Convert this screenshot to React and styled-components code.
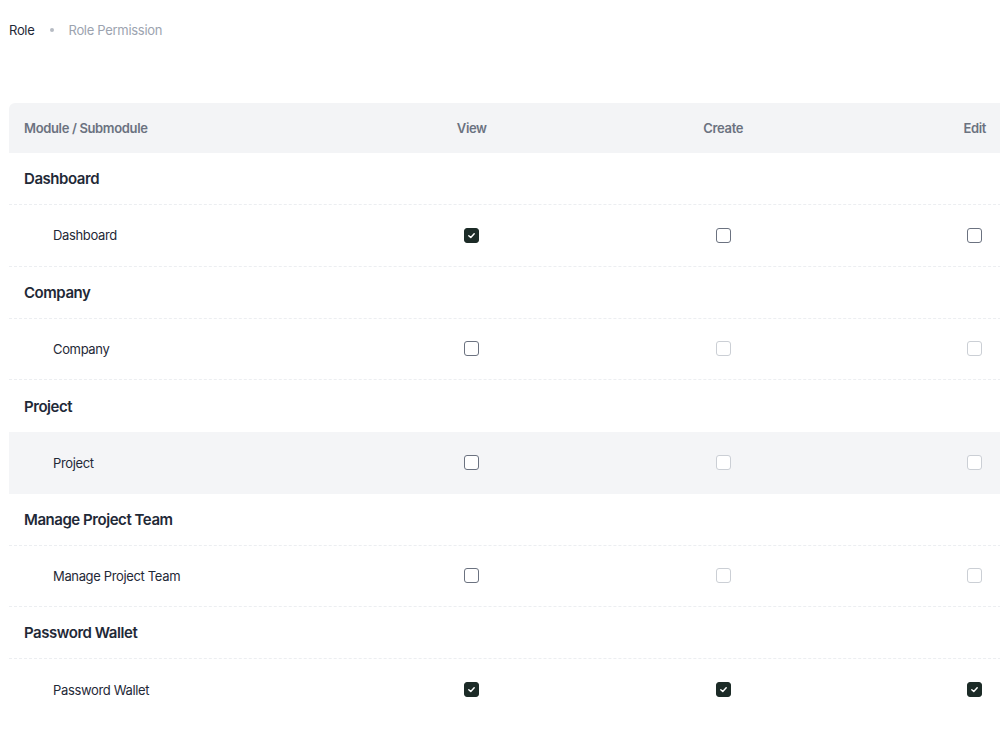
import React from 'react';
import styled, { createGlobalStyle } from 'styled-components';

const Global = createGlobalStyle`
  body {
    margin: 0;
    background: #fff;
    font-family: Inter, "Noto Sans", sans-serif;
    color: #1f2937;
  }
`;

const Page = styled.div`
  padding: 21px 0 0 9px;
  width: 991px;
  overflow: hidden;
`;

const Crumbs = styled.nav`
  display: flex;
  align-items: center;
  gap: 12px;
  font-size: 13px;
  letter-spacing: -0.3px;
  height: 18px;
  margin-bottom: 64px;
`;

const Crumb = styled.span`
  color: ${p => (p.$active ? '#9ca3af' : '#1f2937')};
`;

const Dot = styled.span`
  width: 4px;
  height: 4px;
  border-radius: 50%;
  background: #b6bbc3;
  margin: 0 3px;
`;

const Table = styled.div`
  width: 1092px;
`;

const Row = styled.div`
  display: grid;
  grid-template-columns: 337px repeat(3, 251.5px);
  align-items: center;
  height: ${p => p.$h}px;
  background: ${p => (p.$bg ? p.$bg : 'transparent')};
  border-bottom: ${p => (p.$line ? '1px dashed #eceef1' : 'none')};
  box-sizing: border-box;
  border-top-left-radius: ${p => (p.$head ? '6px' : '0')};
`;

const HeadCell = styled.div`
  font-size: 13px;
  font-weight: 600;
  letter-spacing: -0.35px;
  color: #6b7280;
  text-align: ${p => (p.$left ? 'left' : 'center')};
  padding-left: ${p => (p.$left ? '15px' : '0')};
`;

const GroupName = styled.div`
  font-size: 15px;
  font-weight: 600;
  letter-spacing: -0.45px;
  color: #1f2937;
  padding-left: 15px;
`;

const SubName = styled.div`
  font-size: 13px;
  letter-spacing: -0.35px;
  color: #1f2937;
  padding-left: 44px;
`;

const Cell = styled.div`
  display: flex;
  justify-content: center;
`;

const Box = styled.span`
  width: 15px;
  height: 15px;
  box-sizing: border-box;
  border-radius: 3px;
  display: flex;
  align-items: center;
  justify-content: center;
  background: ${p => (p.$checked ? '#1c2b27' : '#fff')};
  border: 1.5px solid ${p => (p.$checked ? '#1c2b27' : p.$disabled ? '#cbcfd5' : '#6b7280')};
`;

const Check = ({ checked, disabled }) => (
  <Cell>
    <Box $checked={checked} $disabled={disabled}>
      {checked && (
        <svg width="9" height="9" viewBox="0 0 10 10">
          <path d="M2 5.2 L4.2 7.2 L8 3" fill="none" stroke="#fff" strokeWidth="1.6" strokeLinecap="round" strokeLinejoin="round" />
        </svg>
      )}
    </Box>
  </Cell>
);

const modules = [
  { name: 'Dashboard', perms: [1, 0, 0], disabled: false },
  { name: 'Company', perms: [0, 0, 0], disabled: true },
  { name: 'Project', perms: [0, 0, 0], disabled: true, hover: true },
  { name: 'Manage Project Team', perms: [0, 0, 0], disabled: true },
  { name: 'Password Wallet', perms: [1, 1, 1], disabled: false },
];

export default function App() {
  return (
    <Page>
      <Global />
      <Crumbs>
        <Crumb>Role</Crumb>
        <Dot />
        <Crumb $active>Role Permission</Crumb>
      </Crumbs>
      <Table>
        <Row $h={50} $bg="#f3f4f6" $head>
          <HeadCell $left>Module / Submodule</HeadCell>
          <HeadCell>View</HeadCell>
          <HeadCell>Create</HeadCell>
          <HeadCell>Edit</HeadCell>
        </Row>
        {modules.map((m, i) => (
          <React.Fragment key={m.name}>
            <Row $h={52} $line={!m.hover}>
              <GroupName>{m.name}</GroupName>
            </Row>
            <Row $h={61.5} $line={i < modules.length - 1 && !m.hover} $bg={m.hover ? '#f4f5f7' : null}>
              <SubName>{m.name}</SubName>
              {m.perms.map((p, j) => (
                <Check key={j} checked={!!p} disabled={m.disabled && j > 0} />
              ))}
            </Row>
          </React.Fragment>
        ))}
      </Table>
    </Page>
  );
}
